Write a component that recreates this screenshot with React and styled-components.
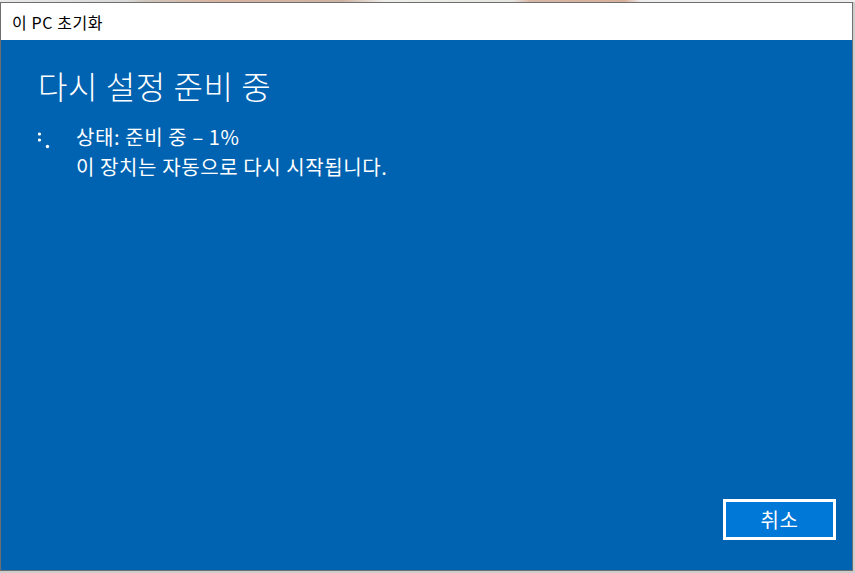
import styled, { createGlobalStyle } from 'styled-components';

const Global = createGlobalStyle`
html, body {
  margin: 0;
  padding: 0;
  background: #cdcdcd;
  font-family: "Noto Sans CJK KR", "Noto Sans", sans-serif;
}
`

const Page = styled.div`
width: 855px;
height: 573px;
display: flex;
flex-direction: column;
overflow: hidden;
`

const Backdrop = styled.div`
height: 2px;
flex: none;
background: linear-gradient(90deg, #e9e9e9 0%, #d8d8d8 15%, #cfc6bd 17%, #d8b4a0 25%, #ceb3a3 40%, #eeeeea 45%, #e6e4df 60%, #d6b7a5 62%, #d7b09b 73%, #eeeeee 75%, #eeeeee 100%);
`

const Window = styled.div`
width: 853px;
height: 569px;
box-sizing: border-box;
border: 1px solid #6e6e6e;
display: flex;
flex-direction: column;
`

const TitleBar = styled.div`
height: 37px;
flex: none;
background: #fff;
display: flex;
align-items: center;
padding-left: 11px;
font-size: 16px;
letter-spacing: 0.6px;
color: #000;
`

const Content = styled.div`
flex: 1;
background: #0063b1;
color: #fff;
display: flex;
flex-direction: column;
padding: 25px 16px 30px 37px;
`

const Heading = styled.h1`
margin: 0;
font-size: 32px;
font-weight: 300;
line-height: 40px;
letter-spacing: 0.6px;
`

const StatusRow = styled.div`
display: flex;
margin-top: 17px;
`

const Spinner = styled.svg`
width: 38px;
height: 30px;
flex: none;
margin-top: 10px;
`

const Lines = styled.div`
display: flex;
flex-direction: column;
font-size: 20px;
line-height: 30px;
letter-spacing: 0.6px;
`

const Footer = styled.div`
margin-top: auto;
display: flex;
justify-content: flex-end;
`

const Button = styled.button`
width: 113px;
height: 41px;
box-sizing: border-box;
border: 3px solid #fff;
background: #0078d7;
color: #fff;
font-family: inherit;
font-size: 20px;
letter-spacing: 0.5px;
padding: 0;
`

export default function App() {
   return (
      <Page>
         <Global />
         <Backdrop />
         <Window>
            <TitleBar>이 PC 초기화</TitleBar>
            <Content>
               <Heading>다시 설정 준비 중</Heading>
               <StatusRow>
                  <Spinner viewBox="0 0 38 30">
                     <circle cx="1.5" cy="2" r="1.6" fill="#fff" />
                     <circle cx="1.5" cy="8" r="1.6" fill="#fff" />
                     <circle cx="9.5" cy="14.5" r="1.7" fill="#fff" />
                  </Spinner>
                  <Lines>
                     <span>상태: 준비 중 – 1%</span>
                     <span>이 장치는 자동으로 다시 시작됩니다.</span>
                  </Lines>
               </StatusRow>
               <Footer>
                  <Button>취소</Button>
               </Footer>
            </Content>
         </Window>
      </Page>
   );
}
